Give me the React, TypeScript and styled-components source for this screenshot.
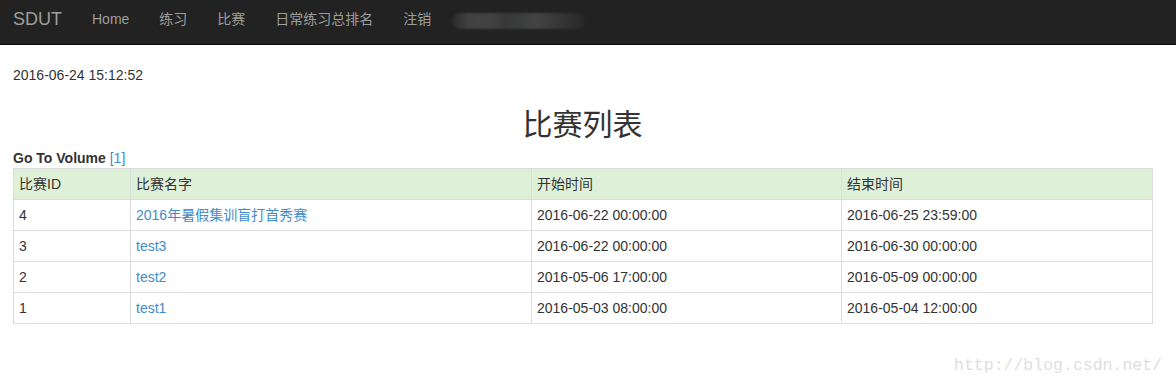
import React from "react";
import styled, { createGlobalStyle } from "styled-components";

const GlobalStyle = createGlobalStyle`
  html, body { margin: 0; padding: 0; background: #fff; }
  body {
    font-family: "Liberation Sans", Arial, "Noto Sans CJK SC", sans-serif;
    font-size: 14px;
    line-height: 20px;
    color: #333;
    height: 385px;
    overflow: hidden;
    position: relative;
  }
`;

const Navbar = styled.nav`
  background: #222;
  border-bottom: 1px solid #080808;
  display: flex;
  align-items: flex-start;
  padding-top: 9px;
  box-sizing: border-box;
  height: 45px;
`;

const Brand = styled.a`
  font-size: 18px;
  line-height: 20px;
  color: #9d9d9d;
  padding: 0 15px 0 13px;
  text-decoration: none;
`;

const NavLink = styled.a`
  font-size: 14px;
  line-height: 20px;
  color: #9d9d9d;
  padding: 0 15px;
  text-decoration: none;
`;

const Blurred = styled.span`
  display: block;
  margin: 4px 0 0 6px;
  width: 134px;
  height: 16px;
  border-radius: 8px;
  background: linear-gradient(
    90deg,
    #2a2a2a 0%,
    #414141 12%,
    #434343 28%,
    #383838 40%,
    #3c3e3e 52%,
    #444 62%,
    #3a3a3a 75%,
    #303030 88%,
    #262626 100%
  );
  filter: blur(0.8px);
`;

const Content = styled.main`
  padding: 20px 24px 0 13px;
`;

const DateLine = styled.div`
  height: 20px;
`;

const Title = styled.h1`
  margin: 21px 0 9px;
  font-size: 30px;
  line-height: 33px;
  font-weight: 400;
  text-align: center;
  color: #333;
  font-family: "Noto Sans CJK SC", "Liberation Sans", sans-serif;
`;

const Volume = styled.div`
  font-weight: bold;
  height: 20px;
`;

const Link = styled.a`
  color: #428bca;
  text-decoration: none;
  font-weight: normal;
`;

const Table = styled.table`
  width: 1139px;
  border-collapse: collapse;
  table-layout: fixed;
  border: 1px solid #ddd;
`;

const HeadCell = styled.th`
  background: #dff0d8;
  border: 1px solid #ddd;
  padding: 5px;
  text-align: left;
  font-weight: normal;
  line-height: 20px;
`;

const Cell = styled.td`
  border: 1px solid #ddd;
  padding: 5px;
  line-height: 20px;
`;

const Watermark = styled.div`
  position: absolute;
  right: 14px;
  top: 356px;
  font-family: "Liberation Mono", monospace;
  font-size: 16.5px;
  color: #dedede;
`;

const rows = [
  { id: 4, name: "2016年暑假集训盲打首秀赛", start: "2016-06-22 00:00:00", end: "2016-06-25 23:59:00" },
  { id: 3, name: "test3", start: "2016-06-22 00:00:00", end: "2016-06-30 00:00:00" },
  { id: 2, name: "test2", start: "2016-05-06 17:00:00", end: "2016-05-09 00:00:00" },
  { id: 1, name: "test1", start: "2016-05-03 08:00:00", end: "2016-05-04 12:00:00" },
];

export default function App() {
  return (
    <>
      <GlobalStyle />
      <Navbar>
        <Brand href="#">SDUT</Brand>
        <NavLink href="#">Home</NavLink>
        <NavLink href="#">练习</NavLink>
        <NavLink href="#">比赛</NavLink>
        <NavLink href="#">日常练习总排名</NavLink>
        <NavLink href="#">注销</NavLink>
        <Blurred />
      </Navbar>
      <Content>
        <DateLine>2016-06-24 15:12:52</DateLine>
        <Title>比赛列表</Title>
        <Volume>
          Go To Volume <Link href="#">[1]</Link>
        </Volume>
        <Table>
          <colgroup>
            <col style={{ width: 117 }} />
            <col style={{ width: 401 }} />
            <col style={{ width: 310 }} />
            <col style={{ width: 311 }} />
          </colgroup>
          <thead>
            <tr>
              <HeadCell>比赛ID</HeadCell>
              <HeadCell>比赛名字</HeadCell>
              <HeadCell>开始时间</HeadCell>
              <HeadCell>结束时间</HeadCell>
            </tr>
          </thead>
          <tbody>
            {rows.map((r) => (
              <tr key={r.id}>
                <Cell>{r.id}</Cell>
                <Cell>
                  <Link href="#">{r.name}</Link>
                </Cell>
                <Cell>{r.start}</Cell>
                <Cell>{r.end}</Cell>
              </tr>
            ))}
          </tbody>
        </Table>
      </Content>
      <Watermark>http://blog.csdn.net/</Watermark>
    </>
  );
}
